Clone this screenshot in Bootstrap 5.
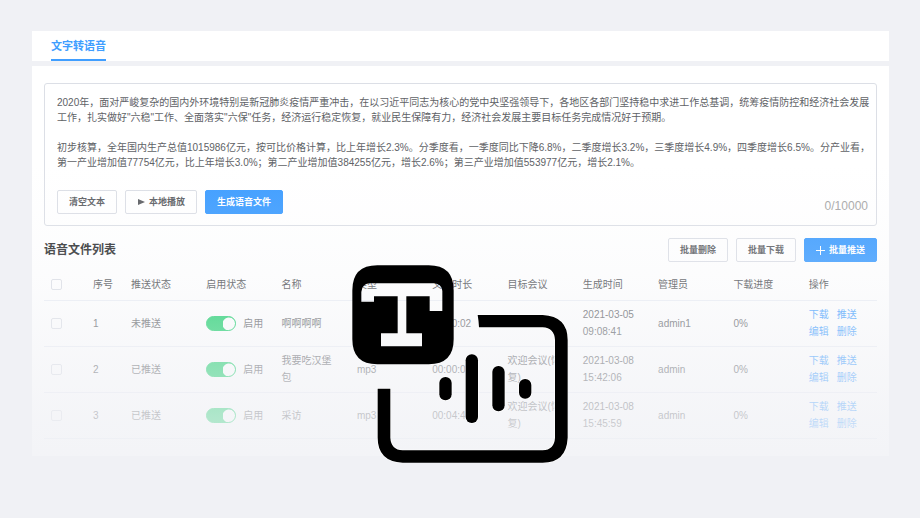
<!DOCTYPE html>
<html lang="zh-CN">
<head>
<meta charset="utf-8">
<meta name="viewport" content="width=device-width, initial-scale=1">
<title>文字转语音</title>
<link href="https://cdn.jsdelivr.net/npm/bootstrap@5.3.0/dist/css/bootstrap.min.css" rel="stylesheet">
<style>
  body { background: #f0f1f5; color: #606266; font: 10px/17px "Liberation Sans", "Noto Sans CJK SC", sans-serif; }
  .page-wrap { padding: 31px 31px 0 32px; }
  .tab-bar { padding: 0 19px; margin-bottom: 5px; }
  .tab-link { display: block; height: 30px; line-height: 30px; font-size: 11px; font-weight: 700; color: #409eff; text-decoration: none; border-bottom: 2px solid #409eff; }
  .panel { padding: 17px 12px; }
  .editor { border: 1px solid #dcdfe6; border-radius: 3px; padding: 11px 2px 11px 12px; margin-bottom: 12px; }
  .editor textarea { height: 95px; line-height: 15px; font-size: 10px; color: #606266; resize: none; border: 0; outline: 0; overflow: hidden; }
  .counter { font-size: 12px; line-height: 16px; color: #a8a8a8; padding-right: 6px; }
  .tool-btn { --bs-btn-font-size: 9px; --bs-btn-font-weight: 700; --bs-btn-line-height: 22px; --bs-btn-padding-y: 0; --bs-btn-padding-x: 11px; --bs-btn-border-radius: 2px; --bs-btn-border-color: #dcdfe6; --bs-btn-color: #606266; --bs-btn-bg: #fff; }
  .tool-btn.btn-primary { --bs-btn-color: #fff; --bs-btn-bg: #409eff; --bs-btn-border-color: #409eff; }
  .tools { gap: 8px; }
  .list-title { font-size: 12px; line-height: 24px; font-weight: 700; color: #303133; }
  .file-table { table-layout: fixed; margin-top: 7px; --bs-table-bg: transparent; --bs-table-color: #606266; }
  .file-table > :not(caption) > * > * { padding: 0 10px 0 7px; border-bottom: 1px solid #ebeef5; vertical-align: middle; }
  .file-table th { height: 31px; font-weight: 400; color: #505256; white-space: nowrap; }
  .file-table td { height: 46px; color: #606266; }
  .file-table tr > :last-child { padding-right: 0; }
  .col-check { width: 42px; }
  .col-no { width: 38px; }
  .file-table .pick { display: block; width: 11px; height: 11px; margin: 0; border: 1px solid #dcdfe6; border-radius: 2px; }
  .file-table .toggle { width: 30px; height: 15px; margin: 1px 0 0; border: 1px solid #13ce66; background: #13ce66 radial-gradient(circle, #fff 6px, transparent 7px) 17px 50% / 12px 14px no-repeat; }
  .file-table .toggle + label { padding-left: 7px; }
  .file-table a { color: #409eff; text-decoration: none; }
  .acts { column-gap: 8px; }
  .fade-cover { background: linear-gradient(to bottom, rgba(240,241,245,0) 25%, rgba(240,241,245,.06) 35%, rgba(240,241,245,.15) 47%, rgba(240,241,245,.24) 56%, rgba(240,241,245,.4) 66%, rgba(240,241,245,.56) 78%, rgba(240,241,245,.71) 90%, rgba(240,241,245,.8) 100%); }
  .emblem { top: 265px; width: 216px; }
</style>
<script src="https://cdn.jsdelivr.net/npm/bootstrap@5.3.0/dist/js/bootstrap.bundle.min.js"></script>
</head>
<body class="position-relative min-vh-100">
<div class="page-wrap">
  <nav class="tab-bar bg-white d-flex"><a class="tab-link" href="#tts" aria-current="page">文字转语音</a></nav>
  <main class="panel bg-white position-relative" id="tts">
    <section class="editor">
      <textarea class="d-block w-100 p-0 bg-transparent" aria-label="文本内容">2020年，面对严峻复杂的国内外环境特别是新冠肺炎疫情严重冲击，在以习近平同志为核心的党中央坚强领导下，各地区各部门坚持稳中求进工作总基调，统筹疫情防控和经济社会发展工作，扎实做好"六稳"工作、全面落实"六保"任务，经济运行稳定恢复，就业民生保障有力，经济社会发展主要目标任务完成情况好于预期。

初步核算，全年国内生产总值1015986亿元，按可比价格计算，比上年增长2.3%。分季度看，一季度同比下降6.8%，二季度增长3.2%，三季度增长4.9%，四季度增长6.5%。分产业看，第一产业增加值77754亿元，比上年增长3.0%；第二产业增加值384255亿元，增长2.6%；第三产业增加值553977亿元，增长2.1%。</textarea>
      <div class="d-flex justify-content-between align-items-end">
        <div class="tools d-flex">
          <button type="button" class="btn tool-btn">清空文本</button>
          <button type="button" class="btn tool-btn d-flex align-items-center gap-1"><svg width="8" height="8" viewBox="0 0 8 8" fill="currentColor" aria-hidden="true"><path d="M1 1v6l7-3z"/></svg>本地播放</button>
          <button type="button" class="btn btn-primary tool-btn">生成语音文件</button>
        </div>
        <span class="counter">0/10000</span>
      </div>
    </section>
    <div class="d-flex justify-content-between">
      <h1 class="list-title mb-0">语音文件列表</h1>
      <div class="tools d-flex">
        <button type="button" class="btn tool-btn">批量删除</button>
        <button type="button" class="btn tool-btn">批量下载</button>
        <button type="button" class="btn btn-primary tool-btn d-flex align-items-center gap-1"><svg width="9" height="9" viewBox="0 0 9 9" stroke="currentColor" aria-hidden="true"><path d="M4.500 0v9M0 4.500h9"/></svg>批量推送</button>
      </div>
    </div>
    <table class="table file-table mb-0">
      <thead>
        <tr><th class="col-check"><input class="form-check-input pick" type="checkbox" aria-label="全选"></th><th class="col-no">序号</th><th>推送状态</th><th>启用状态</th><th>名称</th><th>类型</th><th>文件时长</th><th>目标会议</th><th>生成时间</th><th>管理员</th><th>下载进度</th><th>操作</th></tr>
      </thead>
      <tbody>
        <tr>
          <td><input class="form-check-input pick" type="checkbox" aria-label="选择 1"></td><td>1</td><td>未推送</td>
          <td><div class="form-check form-switch d-flex align-items-center p-0 m-0"><input class="form-check-input toggle flex-shrink-0" type="checkbox" role="switch" id="on1" checked><label class="text-nowrap" for="on1">启用</label></div></td>
          <td>啊啊啊啊</td><td>mp3</td><td>00:00:02</td><td></td><td>2021-03-05 09:08:41</td><td>admin1</td><td>0%</td>
          <td><div class="acts d-flex flex-wrap"><a href="#d1">下载</a><a href="#p1">推送</a><span class="w-100"></span><a href="#e1">编辑</a><a href="#x1">删除</a></div></td>
        </tr>
        <tr>
          <td><input class="form-check-input pick" type="checkbox" aria-label="选择 2"></td><td>2</td><td>已推送</td>
          <td><div class="form-check form-switch d-flex align-items-center p-0 m-0"><input class="form-check-input toggle flex-shrink-0" type="checkbox" role="switch" id="on2" checked><label class="text-nowrap" for="on2">启用</label></div></td>
          <td>我要吃汉堡包</td><td>mp3</td><td>00:00:05</td><td>欢迎会议(恢复)</td><td>2021-03-08 15:42:06</td><td>admin</td><td>0%</td>
          <td><div class="acts d-flex flex-wrap"><a href="#d2">下载</a><a href="#p2">推送</a><span class="w-100"></span><a href="#e2">编辑</a><a href="#x2">删除</a></div></td>
        </tr>
        <tr>
          <td><input class="form-check-input pick" type="checkbox" aria-label="选择 3"></td><td>3</td><td>已推送</td>
          <td><div class="form-check form-switch d-flex align-items-center p-0 m-0"><input class="form-check-input toggle flex-shrink-0" type="checkbox" role="switch" id="on3" checked><label class="text-nowrap" for="on3">启用</label></div></td>
          <td>采访</td><td>mp3</td><td>00:04:45</td><td>欢迎会议(恢复)</td><td>2021-03-08 15:45:59</td><td>admin</td><td>0%</td>
          <td><div class="acts d-flex flex-wrap"><a href="#d3">下载</a><a href="#p3">推送</a><span class="w-100"></span><a href="#e3">编辑</a><a href="#x3">删除</a></div></td>
        </tr>
      </tbody>
    </table>
    <div class="fade-cover position-absolute top-0 start-0 w-100 h-100 pe-none"></div>
  </main>
</div>
<svg class="emblem position-absolute start-50 translate-middle-x pe-none" viewBox="66 44 648 594" fill="#000" stroke="#fff" stroke-width="4" paint-order="stroke" role="img" aria-label="文字转语音">
  <path fill-rule="evenodd" stroke="none" d="M142 45H296Q371 45 371 120V267Q371 342 296 342H142Q67 342 67 267V120Q67 45 142 45ZM94 154V125Q96 101 118 99H312Q335 101 337 122V182H299V138H229V249H276V288H153V249H203V138H132V154Z"/>
  <path d="M443 194H638Q713 198 713 269V562Q709 637 638 637H218Q143 633 143 562V415H181V562Q183 598 218 600H638Q673 598 675 562V269Q673 233 638 231H447Q446 211 443 194Z"/>
  <rect x="328" y="380" width="37" height="70" rx="18"/>
  <rect x="407" y="312" width="37" height="206" rx="18"/>
  <rect x="487" y="347" width="37" height="136" rx="18"/>
  <rect x="567" y="386" width="37" height="59" rx="18"/>
</svg>
</body>
</html>
